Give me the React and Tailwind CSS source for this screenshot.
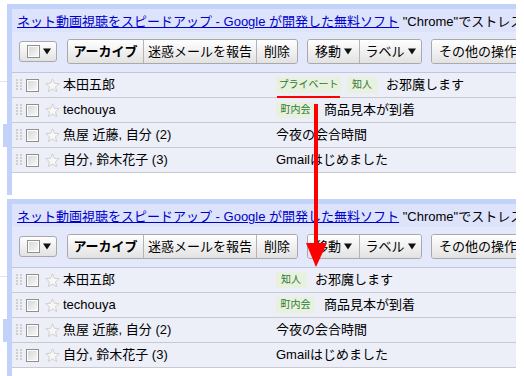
import React from 'react'

const font = "font-['Liberation_Sans','Noto_Sans_CJK_JP',sans-serif]"

function Handle() {
  return (
    <svg width="6" height="12" viewBox="0 0 6 12" className="shrink-0">
      {[0, 3, 6, 9].map(y => (
        <g key={y} fill="#cfcfcf">
          <rect x="0" y={y} width="2" height="2" />
          <rect x="4" y={y} width="2" height="2" />
        </g>
      ))}
    </svg>
  )
}

function Checkbox() {
  return (
    <div className="w-[13px] h-[13px] shrink-0 border border-[#8f8f8f] bg-white p-px">
      <div className="w-full h-full bg-gradient-to-br from-[#d8d8d8] to-[#f8f8f8]" />
    </div>
  )
}

function Star() {
  return (
    <svg width="15" height="15" viewBox="0 0 15 15" className="shrink-0">
      <polygon
        points="7.5,0.8 9.4,5.3 14.2,5.6 10.5,8.8 11.7,13.6 7.5,11 3.3,13.6 4.5,8.8 0.8,5.6 5.6,5.3"
        fill="#f7f7f7"
        stroke="#d0d0d0"
        strokeWidth="1"
        strokeLinejoin="round"
      />
    </svg>
  )
}

function Arrow() {
  return (
    <svg width="8" height="7" viewBox="0 0 8 7" className="ml-[3px] shrink-0">
      <polygon points="0,0.5 8,0.5 4,6.5" fill="#111" />
    </svg>
  )
}

function Chip({ w, children }) {
  return (
    <span className={`${w} h-[16px] shrink-0 flex items-center justify-center bg-[#e8f0de] text-[#2e7a36] text-[10px] leading-none`}>
      {children}
    </span>
  )
}

function Btn({ w, bold, first, left, children }) {
  return (
    <div
      className={`${w} h-full flex items-center ${left ? 'justify-start pl-[7px]' : 'justify-center'} bg-gradient-to-b from-white to-[#e2e2e2] text-[13px] text-black whitespace-nowrap ${bold ? 'font-bold' : ''} ${first ? '' : 'border-l border-[#b4b4b4]'}`}
    >
      {children}
    </div>
  )
}

function Group({ children }) {
  return (
    <div className="h-[25px] flex rounded-[3px] border border-[#a9a9a9] overflow-hidden shrink-0">
      {children}
    </div>
  )
}

function Row({ sender, labels, subject }) {
  return (
    <div className="h-[25px] shrink-0 border-b border-[#c9c9cf] bg-[#eceef8] flex items-center">
      <div className="ml-[4px]"><Handle /></div>
      <div className="ml-[4px]"><Checkbox /></div>
      <div className="ml-[6px]"><Star /></div>
      <div className="ml-[3px] w-[213px] shrink-0 text-[13px] text-black whitespace-nowrap overflow-hidden">{sender}</div>
      <div className="flex items-center gap-[6px]">
        {labels.map(l => (
          <Chip key={l.t} w={l.w}>{l.t}</Chip>
        ))}
      </div>
      <div className={`${labels.length ? 'ml-[9px]' : ''} text-[13px] text-black whitespace-nowrap`}>{subject}</div>
    </div>
  )
}

function Panel({ firstLabels }) {
  const rows = [
    { sender: '本田五郎', labels: firstLabels, subject: 'お邪魔します' },
    { sender: 'techouya', labels: [{ t: '町内会', w: 'w-[39px]' }], subject: '商品見本が到着' },
    { sender: '魚屋 近藤, 自分 (2)', labels: [], subject: '今夜の会合時間' },
    { sender: '自分, 鈴木花子 (3)', labels: [], subject: 'Gmailはじめました' },
  ]
  return (
    <div className="flex shrink-0">
      {/* left gutter: selection marker */}
      <div className="w-[7px] flex flex-col shrink-0">
        <div className="h-[77px]" />
        <div className="h-px bg-[#e4e4e4]" />
        <div className="h-[42px]" />
        <div className="ml-[3px] w-[4px] h-[23px] bg-[#c3d2fb]" />
      </div>

      <div className="w-[509px] h-[191px] border-l-[5px] border-t-[5px] border-[#c3d2fb] bg-white flex flex-col overflow-hidden">
        <div className="h-[23px] shrink-0 bg-[#dde3fb] pl-[5px] pt-[3px] text-[13px] whitespace-nowrap overflow-hidden">
          <span className="text-[#0000cc] underline">ネット動画視聴をスピードアップ - Google が開発した無料ソフト</span>
          <span className="text-black"> "Chrome"でストレスなくネットを楽しもう</span>
        </div>

        <div className="h-[41px] shrink-0 bg-[#e3e8fb] border-b border-[#c0c6dc] shadow-[0_1px_1px_#d6dbea] flex items-center pl-[7px] pb-[1px] overflow-hidden">
          <div className="w-[38px] h-[21px] shrink-0 rounded-[3px] border border-[#a9a9a9] bg-gradient-to-b from-white to-[#e2e2e2] flex items-center pl-[7px]">
            <Checkbox />
            <Arrow />
          </div>
          <div className="ml-[10px]">
            <Group>
              <Btn w="w-[75px]" bold first>アーカイブ</Btn>
              <Btn w="w-[113px]">迷惑メールを報告</Btn>
              <Btn w="w-[41px]">削除</Btn>
            </Group>
          </div>
          <div className="ml-[9px]">
            <Group>
              <Btn w="w-[51px]" first>移動<Arrow /></Btn>
              <Btn w="w-[62px]">ラベル<Arrow /></Btn>
            </Group>
          </div>
          <div className="ml-[9px]">
            <Group>
              <Btn w="w-[100px]" first left>その他の操作<Arrow /></Btn>
            </Group>
          </div>
        </div>

        {rows.map(r => (
          <Row key={r.sender} {...r} />
        ))}
      </div>
    </div>
  )
}

export default function App() {
  return (
    <div className={`relative w-[524px] h-[376px] overflow-hidden bg-white pt-[4px] flex flex-col gap-[4px] ${font}`}>
      <Panel
        firstLabels={[
          { t: 'プライベート', w: 'w-[65px]' },
          { t: '知人', w: 'w-[30px]' },
        ]}
      />
      <Panel firstLabels={[{ t: '知人', w: 'w-[30px]' }]} />

      {/* annotation overlay */}
      <svg className="absolute inset-0 pointer-events-none" width="524" height="376">
        <rect x="277" y="96" width="63" height="2" fill="#f00" />
        <rect x="314" y="104" width="4" height="141" fill="#f00" />
        <polygon points="306,243 327,243 316,267" fill="#f00" />
      </svg>
    </div>
  )
}
